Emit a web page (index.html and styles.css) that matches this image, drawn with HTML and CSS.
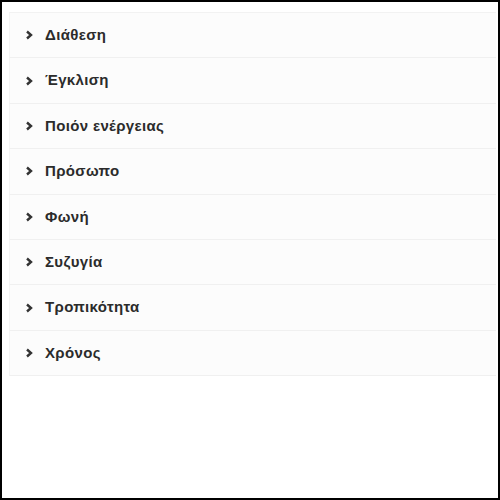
FILE: index.html
```html
<!DOCTYPE html>
<html lang="el">
  <head>
    <meta charset="UTF-8" />
    <meta name="viewport" content="width=device-width, initial-scale=1.0" />
    <title>Ρήμα</title>
    <link rel="stylesheet" href="styles.css">
  </head>
  <body>
    <div id="frame">
      <ul class="facet-list">
        <li class="facet"><svg class="chevron" viewBox="0 0 8 10"><polyline points="2,1.5 6,5 2,8.5" /></svg><span>Διάθεση</span></li>
        <li class="facet"><svg class="chevron" viewBox="0 0 8 10"><polyline points="2,1.5 6,5 2,8.5" /></svg><span>Έγκλιση</span></li>
        <li class="facet"><svg class="chevron" viewBox="0 0 8 10"><polyline points="2,1.5 6,5 2,8.5" /></svg><span>Ποιόν ενέργειας</span></li>
        <li class="facet"><svg class="chevron" viewBox="0 0 8 10"><polyline points="2,1.5 6,5 2,8.5" /></svg><span>Πρόσωπο</span></li>
        <li class="facet"><svg class="chevron" viewBox="0 0 8 10"><polyline points="2,1.5 6,5 2,8.5" /></svg><span>Φωνή</span></li>
        <li class="facet"><svg class="chevron" viewBox="0 0 8 10"><polyline points="2,1.5 6,5 2,8.5" /></svg><span>Συζυγία</span></li>
        <li class="facet"><svg class="chevron" viewBox="0 0 8 10"><polyline points="2,1.5 6,5 2,8.5" /></svg><span>Τροπικότητα</span></li>
        <li class="facet"><svg class="chevron" viewBox="0 0 8 10"><polyline points="2,1.5 6,5 2,8.5" /></svg><span>Χρόνος</span></li>
      </ul>
    </div>
  </body>
</html>
```

FILE: styles.css
```css
html, body {
  margin: 0;
  padding: 0;
  background-color: #fff;
}
body {
  font-family: "Liberation Sans", Arial, sans-serif;
}
#frame {
  box-sizing: border-box;
  width: 500px;
  height: 500px;
  border: 2px solid #000;
  padding: 10px 2px 0 7px;
}
.facet-list {
  list-style: none;
  margin: 0;
  padding: 0;
  border-top: 1px solid #f2f2f2;
}
.facet {
  display: flex;
  align-items: center;
  gap: 12px;
  padding: 12px 15px;
  line-height: 20.4px;
  font-size: 15px;
  font-weight: bold;
  letter-spacing: 0.35px;
  color: #2b2b2b;
  background-color: #fcfcfc;
  border-bottom: 1px solid #f0f0f0;
  border-left: 1px solid #f4f4f4;
}
.chevron {
  width: 8px;
  height: 10px;
  fill: none;
  stroke: #333;
  stroke-width: 2.4;
}
```
